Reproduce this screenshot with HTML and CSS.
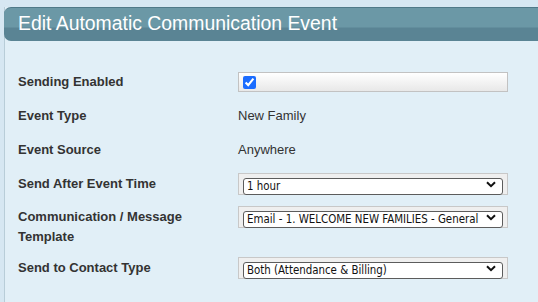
FILE: index.html
```html
<!DOCTYPE html>
<html lang="en">
<head>
    <meta charset="UTF-8">
    <title>Edit Automatic Communication Event</title>
    <link rel="stylesheet" href="styles.css">
</head>
<body>
    <div class="page">
        <div class="panel">
            <div class="panel-head">Edit Automatic Communication Event</div>

            <div class="form">
                <div class="row">
                    <div class="label">Sending Enabled</div>
                    <div class="field">
                        <div class="check-wrap">
                            <input type="checkbox" checked>
                        </div>
                    </div>
                </div>

                <div class="row">
                    <div class="label">Event Type</div>
                    <div class="field value">New Family</div>
                </div>

                <div class="row">
                    <div class="label">Event Source</div>
                    <div class="field value">Anywhere</div>
                </div>

                <div class="row tight">
                    <div class="label">Send After Event Time</div>
                    <div class="field">
                        <div class="select-wrap">
                            <select>
                                <option>1 hour</option>
                            </select>
                            <svg class="chev" width="10" height="7" viewBox="0 0 10 7"><path d="M1 1.2 L5 5.2 L9 1.2" fill="none" stroke="#111" stroke-width="2"/></svg>
                        </div>
                    </div>
                </div>

                <div class="row tighter">
                    <div class="label">Communication / Message<br>Template</div>
                    <div class="field">
                        <div class="select-wrap">
                            <select>
                                <option>Email - 1. WELCOME NEW FAMILIES - General</option>
                            </select>
                            <svg class="chev" width="10" height="7" viewBox="0 0 10 7"><path d="M1 1.2 L5 5.2 L9 1.2" fill="none" stroke="#111" stroke-width="2"/></svg>
                        </div>
                    </div>
                </div>

                <div class="row">
                    <div class="label">Send to Contact Type</div>
                    <div class="field">
                        <div class="select-wrap">
                            <select>
                                <option>Both (Attendance &amp; Billing)</option>
                            </select>
                            <svg class="chev" width="10" height="7" viewBox="0 0 10 7"><path d="M1 1.2 L5 5.2 L9 1.2" fill="none" stroke="#111" stroke-width="2"/></svg>
                        </div>
                    </div>
                </div>
            </div>
        </div>
    </div>
</body>
</html>
```

FILE: styles.css
```css
body {
    margin: 0;
    font-family: "Liberation Sans", Arial, sans-serif;
    background-color: #d6e7f2;
    color: #333;
}

.page {
    padding-top: 7px;
    height: 295px;
    overflow: hidden;
}

.panel {
    margin-left: 4px;
    background-color: #e1eff7;
    border-left: 1px solid #b8cdd8;
    height: 100%;
}

.panel-head {
    height: 33px;
    margin-left: -1px;
    border-top: 1px solid #4f7988;
    border-radius: 7px 0 0 7px;
    background: linear-gradient(to bottom, #6b98a6 0, #6b98a6 19px, #5a8494 20px, #5a8494 100%);
    color: #fff;
    font-size: 19.4px;
    line-height: 30px;
    padding-left: 14px;
}

.form {
    padding: 31px 0 0 13px;
}

.row {
    display: flex;
    align-items: flex-start;
    min-height: 20px;
    margin-bottom: 14px;
}

.row.tight {
    margin-bottom: 13px;
}

.row.tighter {
    margin-bottom: 11px;
}

.label {
    width: 220px;
    font-size: 13px;
    font-weight: bold;
    line-height: 20px;
    color: #333;
}

.field {
    width: 270px;
    height: 20px;
}

.value {
    font-size: 13px;
    line-height: 20px;
}

.check-wrap {
    height: 18px;
    border: 1px solid #c2c2c2;
    background: linear-gradient(to bottom, #ffffff, #e8e8e8);
    display: flex;
    align-items: center;
    padding-left: 4px;
}

.check-wrap input {
    margin: 0;
    width: 13px;
    height: 13px;
    accent-color: #1a6cff;
}

.select-wrap {
    position: relative;
    margin-top: -1px;
    height: 22px;
    border: 1px solid #c8c8c8;
    background-color: #efefef;
    padding: 2px 4px 0 4px;
    box-sizing: border-box;
}

.select-wrap select {
    appearance: none;
    -webkit-appearance: none;
    width: 100%;
    height: 17px;
    margin: 0;
    padding: 0 0 0 3px;
    border: 1px solid #5c5c5c;
    border-radius: 3px;
    background-color: #fff;
    color: #111;
    font-family: "DejaVu Sans Condensed", "DejaVu Sans", sans-serif;
    font-size: 11.4px;
}

.chev {
    position: absolute;
    right: 11px;
    top: 7px;
}
```
